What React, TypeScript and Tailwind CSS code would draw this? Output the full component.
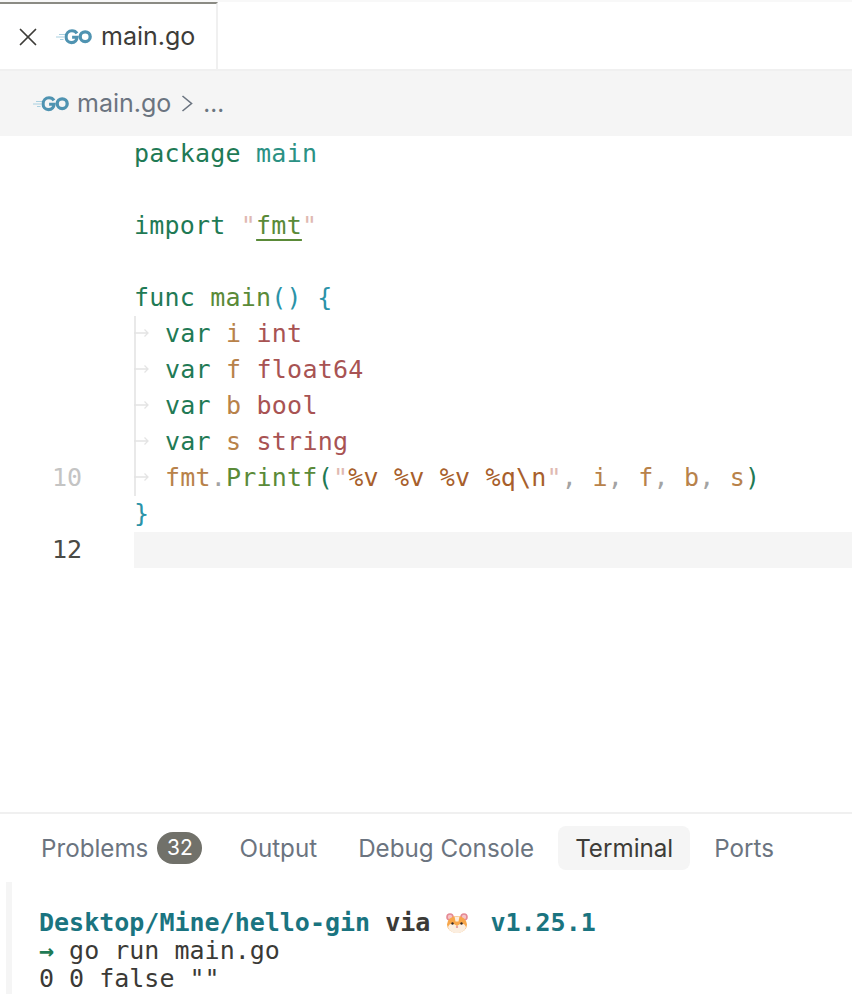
import { X } from 'lucide-react';
import type { ReactNode } from 'react';

const GoLogo = () => (
  <svg width="36" height="16" viewBox="0 0 36 16" fill="none" className="shrink-0">
    <path d="M3 5.5h6.5M0 8h8M4 10.5h3.5" stroke="#a9d0e0" strokeWidth="1" />
    <path d="M21 4.4C19.9 2.6 18 1.8 16 1.8c-3.4 0-5.9 2.6-5.9 6.2 0 3.2 2.2 5.6 5.4 5.6 3 0 5.3-2 5.6-5.4h-5" stroke="#4f93b1" strokeWidth="3.1" />
    <ellipse cx="29.2" cy="7.7" rx="5" ry="4.9" stroke="#4f93b1" strokeWidth="3.3" />
  </svg>
);

const Hamster = () => (
  <svg width="24" height="24" viewBox="0 0 24 24" className="shrink-0">
    <circle cx="5" cy="6" r="3.8" fill="#e58a94" />
    <circle cx="19" cy="6" r="3.8" fill="#e58a94" />
    <circle cx="5" cy="6" r="2.2" fill="#f6c3c6" />
    <circle cx="19" cy="6" r="2.2" fill="#f6c3c6" />
    <ellipse cx="12" cy="13.5" rx="10" ry="8.5" fill="#f7a64a" />
    <path d="M3 16c1-3 3-4 6-3l3 2 3-2c3-1 5 0 6 3-1 4-5 6-9 6s-8-2-9-6z" fill="#fbeee0" />
    <path d="M9.5 5.5h5l-1 5h-3z" fill="#fbeee0" />
    <circle cx="7.5" cy="12.5" r="1.2" fill="#3a2a22" />
    <circle cx="16.5" cy="12.5" r="1.2" fill="#3a2a22" />
    <ellipse cx="12" cy="16" rx="1.2" ry="0.8" fill="#d9707c" />
  </svg>
);

const kw = 'text-[#1f7a55]';
const vr = 'text-[#b8824a]';
const ty = 'text-[#a85353]';
const br = 'text-[#2b93a8]';
const fn = 'text-[#5a8a38]';
const qt = 'text-[#e0b9b2]';
const fm = 'text-[#a85f2c]';
const pc = 'text-[#a3a3a3]';

const Tab = () => (
  <span className="relative inline-block w-[31px] h-9 align-top">
    <svg width="16" height="10" viewBox="0 0 16 10" fill="none" className="absolute left-0 top-[12px]">
      <path d="M0 5h14M10.5 1.5 14 5l-3.5 3.5" stroke="#e4e4e4" strokeWidth="1.3" />
    </svg>
  </span>
);

const Line = ({ num, active, guide, children }: { num?: string; active?: boolean; guide?: boolean; children?: ReactNode }) => (
  <div className="flex h-9">
    <div className={`w-[82px] shrink-0 text-right text-[25px] leading-9 ${active ? 'text-[#4a4a45]' : 'text-[#c4c4c4]'}`}>{num}</div>
    <div className="w-[52px] shrink-0" />
    <div className={`flex-1 whitespace-pre text-[25px] leading-9 tracking-[0.21px] relative ${active ? 'bg-[#f5f5f5]' : ''}`}>
      {guide && <span className="absolute left-0 top-0 bottom-0 w-[2px] bg-[#e9e9e9]" />}
      {children}
    </div>
  </div>
);

const Comma = () => <span className={pc}>,</span>;

const PanelTab = ({ label, active, badge }: { label: string; active?: boolean; badge?: string }) => (
  <div className={`h-11 flex items-center gap-[9px] rounded-lg pl-[17px] ${badge ? 'pr-[13px]' : 'pr-[17px]'} text-[24.2px] ${active ? 'bg-[#f5f5f5] text-[#3d3c38]' : 'text-[#6b7480]'}`}>
    <span className="pt-[2px]">{label}</span>
    {badge && <span className="h-8 w-[45px] rounded-full bg-[#71716a] text-white text-[21px] flex items-center justify-center">{badge}</span>}
  </div>
);

export default function App() {
  return (
    <div className="h-[998px] w-[852px] overflow-hidden bg-white flex flex-col font-['Inter',sans-serif]">
      <div className="h-[2px] shrink-0 bg-[#f8f8f8]" />
      {/* tabs */}
      <div className="h-[69px] shrink-0 flex border-b-2 border-[#f0f0f0]">
        <div className="w-[218px] border-t-2 border-r-2 border-t-[#8b8b84] border-r-[#f0f0f0] flex items-center pl-[13px]">
          <X size={30} strokeWidth={1.4} className="text-[#3d3c38]" />
          <div className="ml-[13px]"><GoLogo /></div>
          <span className="ml-[9px] text-[25px] text-[#3d3c38]">main.go</span>
        </div>
      </div>

      {/* breadcrumbs */}
      <div className="h-[65px] shrink-0 bg-[#f5f5f5] flex items-center pl-[33px] text-[25px] text-[#6b7480]">
        <GoLogo />
        <span className="ml-[8px]">main.go</span>
        <svg width="12" height="17" viewBox="0 0 12 17" fill="none" className="ml-[10px]">
          <path d="M1.5 1 10.5 8.5 1.5 16" stroke="#6b7480" strokeWidth="1.6" />
        </svg>
        <span className="ml-[10px] text-[24px]">...</span>
      </div>

      {/* editor */}
      <div className="flex-1 font-['DejaVu_Sans_Mono',monospace]">
        <Line><span className={kw}>package</span> <span className="text-[#2b9184]">main</span></Line>
        <Line />
        <Line><span className={kw}>import</span> <span className={qt}>"</span><span className={`${fn} underline decoration-2 underline-offset-[5px]`}>fmt</span><span className={qt}>"</span></Line>
        <Line />
        <Line><span className={kw}>func</span> <span className={fn}>main</span><span className={br}>() {'{'}</span></Line>
        <Line guide><Tab /><span className={kw}>var</span> <span className={vr}>i</span> <span className={ty}>int</span></Line>
        <Line guide><Tab /><span className={kw}>var</span> <span className={vr}>f</span> <span className={ty}>float64</span></Line>
        <Line guide><Tab /><span className={kw}>var</span> <span className={vr}>b</span> <span className={ty}>bool</span></Line>
        <Line guide><Tab /><span className={kw}>var</span> <span className={vr}>s</span> <span className={ty}>string</span></Line>
        <Line guide num="10">
          <Tab /><span className={vr}>fmt</span><span className={pc}>.</span><span className={fn}>Printf</span><span className={kw}>(</span><span className={qt}>"</span><span className={fm}>%v %v %v %q\n</span><span className={qt}>"</span><Comma /> <span className={vr}>i</span><Comma /> <span className={vr}>f</span><Comma /> <span className={vr}>b</span><Comma /> <span className={vr}>s</span><span className={kw}>)</span>
        </Line>
        <Line><span className={br}>{'}'}</span></Line>
        <Line num="12" active />
      </div>

      {/* bottom panel */}
      <div className="h-[186px] shrink-0 border-t-2 border-[#f0f0f0] flex flex-col">
        <div className="flex gap-[7px] pl-[24px] pt-[12px]">
          <PanelTab label="Problems" badge="32" />
          <PanelTab label="Output" />
          <PanelTab label="Debug Console" />
          <PanelTab label="Terminal" active />
          <PanelTab label="Ports" />
        </div>
        <div className="mt-[12px] ml-[6px] pl-[27px] border-l-[6px] border-[#f5f5f5] h-[112px] pt-[27px] font-['DejaVu_Sans_Mono',monospace] text-[25px] leading-[28px] text-[#3b3a36] whitespace-pre">
          <div className="flex items-center h-7 font-bold">
            <span className="text-[#1a7480]">Desktop/Mine/hello-gin</span>
            <span> via </span>
            <Hamster />
            <span className="text-[#1a7480] ml-[21px]">v1.25.1</span>
          </div>
          <div><span className="text-[#1f7a55] font-bold">→</span> go run main.go</div>
          <div>0 0 false ""</div>
        </div>
      </div>
    </div>
  );
}
